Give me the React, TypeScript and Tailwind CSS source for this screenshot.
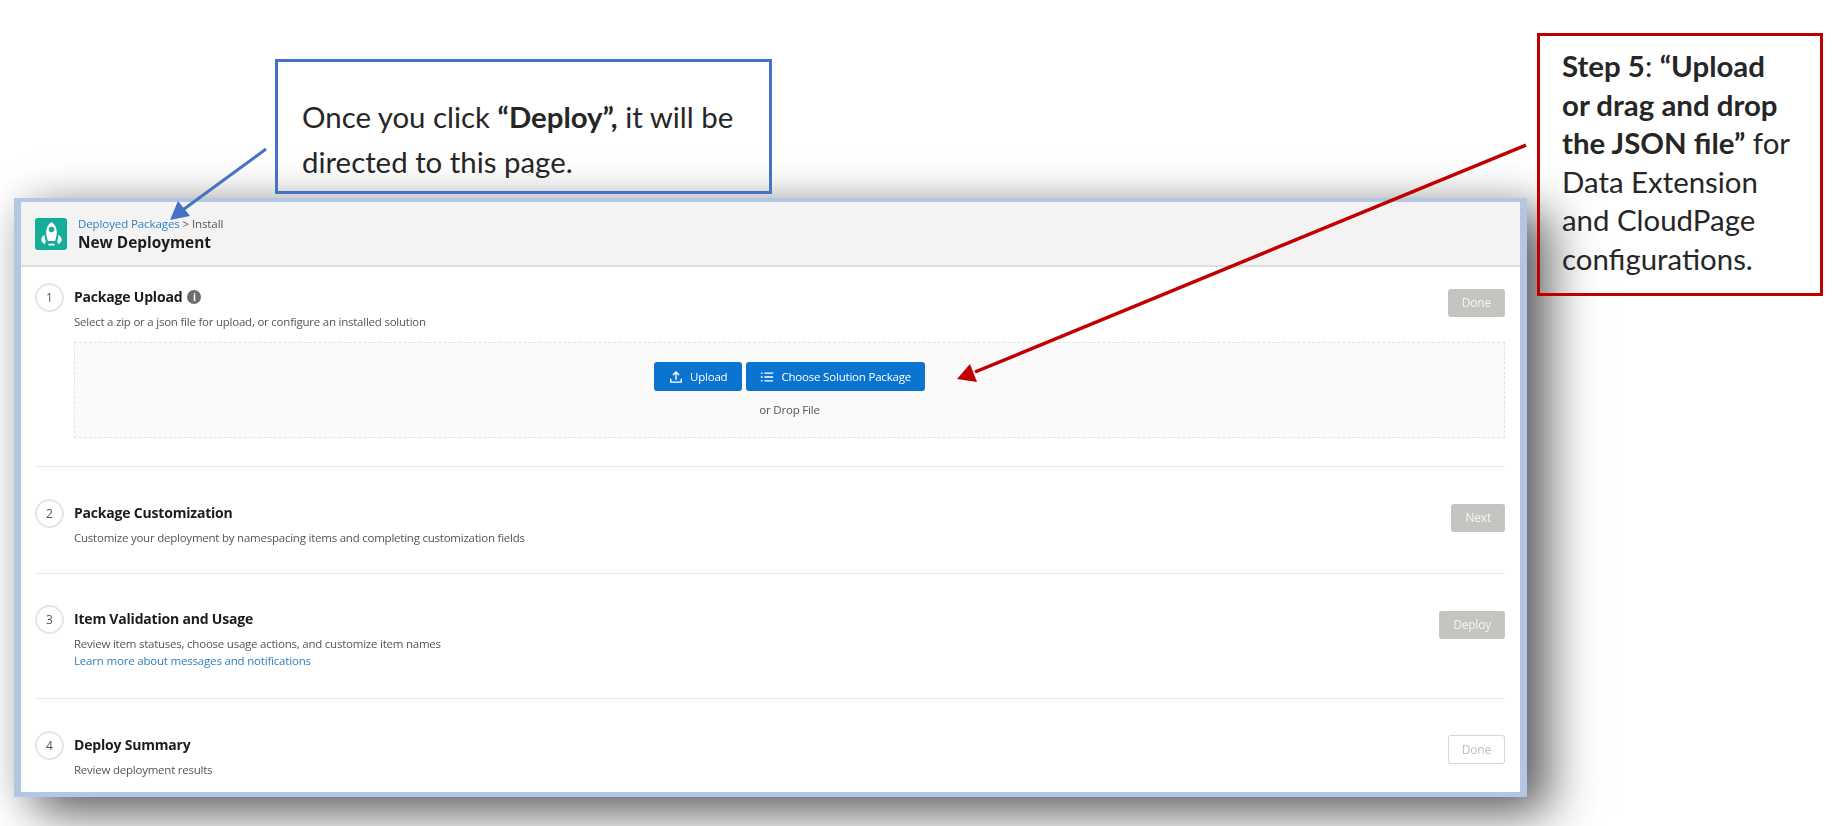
import type { ReactNode } from "react";

const ui = "font-['Open_Sans',sans-serif]";

function Rocket() {
  return (
    <div className="flex h-[32px] w-[32px] items-center justify-center rounded-[3px] bg-[#14ad99]">
      <svg viewBox="0 0 32 32" className="h-[32px] w-[32px]" fill="#fff">
        <path d="M16.500 4c3.600 2.200 5.300 6.200 5.300 10 0 3-.8 6-1.700 9h-7.200c-.9-3-1.700-6-1.700-9 0-3.800 1.700-7.800 5.300-10z" />
        <circle cx="16.500" cy="11.500" r="2.800" fill="#14ad99" />
        <path d="M9.600 17c.1 2 .5 4.500 1.200 6.800L9.700 26c-2-.9-3.400-2.500-3.400-4.500 0-1.800 1.300-3.500 3.300-4.500zM23.400 17c2 1 3.300 2.700 3.300 4.500 0 2-1.400 3.600-3.400 4.500l-1.100-2.200c.7-2.300 1.100-4.800 1.200-6.800zM13.500 25.800h6v1.700h-6z" />
      </svg>
    </div>
  );
}

function UploadIcon() {
  return (
    <svg viewBox="0 0 16 16" className="h-[14px] w-[14px]" fill="none" stroke="#fff" strokeWidth="1.600">
      <path d="M8 11V2.500M4.500 5.800 8 2.300l3.500 3.500M2 10v3.800h12V10" />
    </svg>
  );
}

function ListIcon() {
  return (
    <svg viewBox="0 0 16 16" className="h-[14px] w-[14px]" fill="none" stroke="#fff" strokeWidth="1.500">
      <path d="M5 3.500h10M5 8h10M5 12.500h10M1 3.500h2M1 8h2M1 12.500h2" />
    </svg>
  );
}

function Step(props: {
  n: number;
  title: ReactNode;
  sub: string;
  link?: string;
  button: string;
  outline?: boolean;
  className: string;
  btnClass: string;
  children?: ReactNode;
}) {
  return (
    <section className={props.className}>
      <div className="flex items-start">
        <div className="mr-[10px] flex h-[29px] w-[29px] shrink-0 items-center justify-center rounded-full border-2 border-[#e6e6e6] text-[12px] text-[#555]">
          {props.n}
        </div>
        <div className="min-w-0 flex-1">
          <div className="flex items-start justify-between">
            <div>
              <h2 className="flex h-[28px] items-center gap-[5px] text-[14px] leading-none font-bold tracking-[-0.2px] text-[#1c1c1c]">
                {props.title}
              </h2>
              <p className="mt-[3px] text-[11.500px] leading-[16px] tracking-[-0.23px] text-[#555]">{props.sub}</p>
              {props.link && (
                <a className="block text-[11.500px] leading-[17px] tracking-[-0.19px] text-[#2f80c2]">{props.link}</a>
              )}
            </div>
            <button
              className={
                props.outline
                  ? `${props.btnClass} h-[29px] rounded-[3px] border border-[#d5d5d5] bg-white px-[13px] text-[12px] tracking-[-0.2px] text-[#c0c0c0]`
                  : `${props.btnClass} h-[28px] rounded-[3px] bg-[#c6c4c1] px-[14px] text-[12px] tracking-[-0.2px] text-[#f4f4f4]`
              }
            >
              {props.button}
            </button>
          </div>
          {props.children}
        </div>
      </div>
    </section>
  );
}

export default function App() {
  return (
    <div className="relative h-[826px] w-[1842px] overflow-hidden bg-white">
      <div className="pt-[198px] pl-[14px]">
        <div
          className={`${ui} h-[599px] w-[1513px] border-x-[7px] border-t-[4px] border-b-[5px] border-[#b4c7e2] bg-white shadow-[22px_16px_46px_rgba(0,0,0,0.62),0_0_36px_rgba(0,0,0,0.1)] [filter:blur(0.5px)]`}
        >
          <header className="flex h-[65px] items-center gap-[11px] border-b-2 border-[#dedede] bg-[#f3f3f3] pl-[14px]">
            <Rocket />
            <div>
              <div className="text-[11.500px] leading-[17px] tracking-[-0.1px] text-[#555]">
                <a className="text-[#2f80c2]">Deployed Packages</a> &gt; Install
              </div>
              <h1 className="text-[15.400px] leading-[21px] font-bold text-[#1c1c1c]">New Deployment</h1>
            </div>
          </header>
          <div className="pr-[15px] pl-[14px]">
            <Step
              n={1}
              className="h-[200px] border-b border-[#e8e8e8] pt-[16px]"
              btnClass="mt-[6px]"
              title={
                <>
                  Package Upload
                  <span className="flex h-[14px] w-[14px] items-center justify-center rounded-full bg-[#6e6e6e] text-[10px] font-bold text-white">
                    i
                  </span>
                </>
              }
              sub="Select a zip or a json file for upload, or configure an installed solution"
              button="Done"
            >
              <div className="mt-[12px] flex h-[96px] flex-col items-center border border-dashed border-[#e2e2e2] bg-[#fafafa] pt-[19px]">
                <div className="flex gap-[4px]">
                  <button className="flex h-[29px] items-center gap-[7px] rounded-[3px] bg-[#0b74d1] px-[15px] text-[11.500px] tracking-[-0.2px] text-white">
                    <UploadIcon />
                    Upload
                  </button>
                  <button className="flex h-[29px] items-center gap-[7px] rounded-[3px] bg-[#0b74d1] px-[14px] text-[11.500px] tracking-[-0.2px] text-white">
                    <ListIcon />
                    Choose Solution Package
                  </button>
                </div>
                <p className="mt-[10px] text-[11.500px] leading-[17px] tracking-[-0.2px] text-[#555]">or Drop File</p>
              </div>
            </Step>
            <Step
              n={2}
              className="h-[107px] border-b border-[#e8e8e8] pt-[32px]"
              btnClass="mt-[5px]"
              title="Package Customization"
              sub="Customize your deployment by namespacing items and completing customization fields"
              button="Next"
            />
            <Step
              n={3}
              className="h-[125px] border-b border-[#e8e8e8] pt-[31px]"
              btnClass="mt-[6px]"
              title="Item Validation and Usage"
              sub="Review item statuses, choose usage actions, and customize item names"
              link="Learn more about messages and notifications"
              button="Deploy"
            />
            <Step
              n={4}
              className="pt-[32px]"
              btnClass="mt-[4px]"
              title="Deploy Summary"
              sub="Review deployment results"
              button="Done"
              outline
            />
          </div>
        </div>
      </div>

      <div className="absolute top-[59px] left-[275px] flex h-[135px] w-[497px] items-end border-[3px] border-[#4472c4] pb-[7px] pl-[24px] font-['Lato',sans-serif] text-[29.400px] leading-[45px] text-[#262626]">
        <p>
          Once you click <b>“Deploy”,</b> it will be
          <br />
          directed to this page.
        </p>
      </div>

      <div className="absolute top-[33px] left-[1537px] h-[263px] w-[286px] border-[3.500px] border-[#c00000] pt-[11px] pl-[22px] font-['Lato',sans-serif] text-[29.400px] leading-[38.500px] text-[#262626]">
        <p>
          <b>Step 5</b>: <b>“Upload</b>
          <br />
          <b>or drag and drop</b>
          <br />
          <b>the JSON file”</b> for
          <br />
          Data Extension
          <br />
          and CloudPage
          <br />
          configurations.
        </p>
      </div>

      <svg className="absolute inset-0 h-[826px] w-[1842px]" viewBox="0 0 1842 826">
        <path d="M266 149 180 212" stroke="#4472c4" strokeWidth="3" fill="none" />
        <path d="M170 220 178 201 190 216z" fill="#4472c4" />
        <path d="M1526 145 975 372" stroke="#c00000" strokeWidth="3.500" fill="none" />
        <path d="M957 379 970 364 977 382z" fill="#c00000" />
      </svg>
    </div>
  );
}
